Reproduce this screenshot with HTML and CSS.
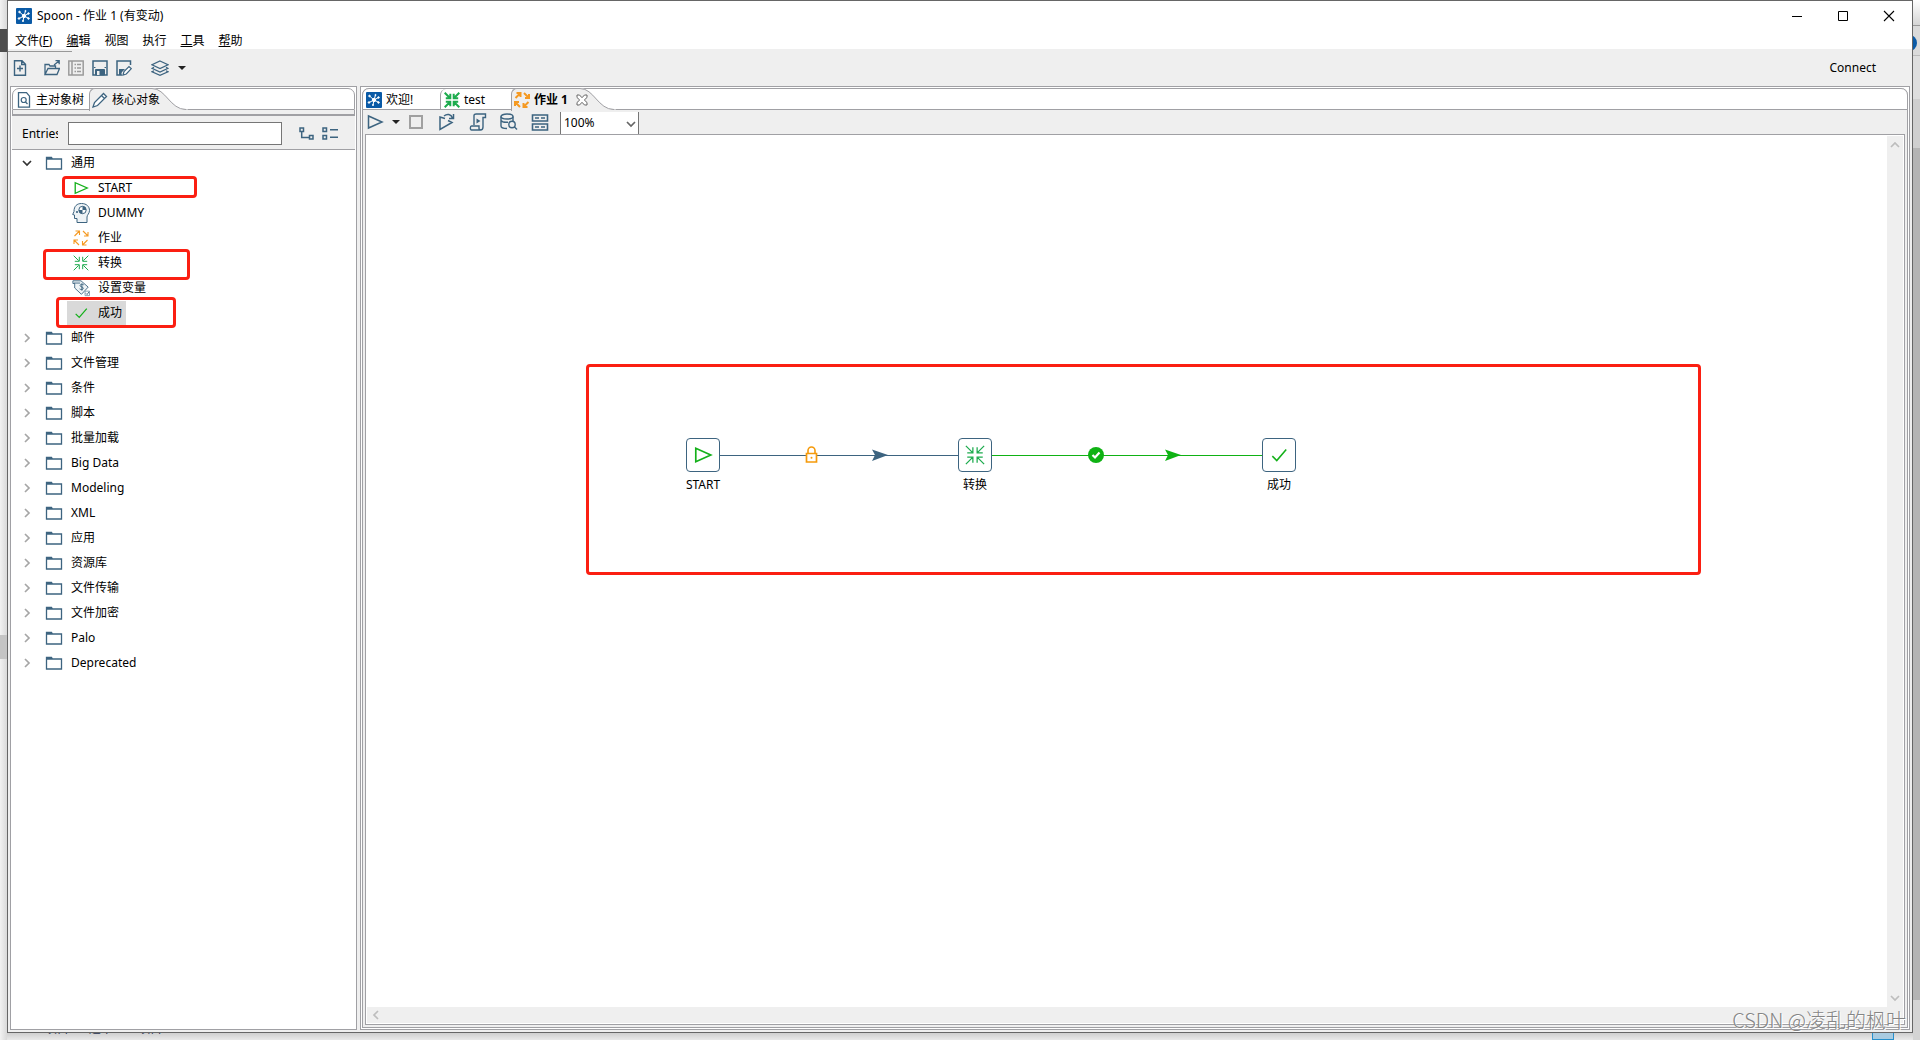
FILE: index.html
```html
<!DOCTYPE html>
<html lang="zh-CN">
<head>
<meta charset="utf-8">
<title>Spoon - 作业 1 (有变动)</title>
<link rel="stylesheet" href="styles.css">
</head>
<body>
<svg class="sprite" aria-hidden="true">
  <symbol id="logo" viewBox="0 0 16 16"><rect width="16" height="16" rx="1" fill="#0a5aa6"/><g stroke="#fff" stroke-width="1" fill="#fff"><path d="M8 8 3.500 4M8 8l1.500-5M8 8l4.500-2.500M8 8l5 2.500M8 8l-1 5M8 8l-5 2.500" fill="none"/><circle cx="8" cy="8" r="1.700"/><circle cx="3.500" cy="4" r=".8"/><circle cx="9.500" cy="3" r=".6"/><circle cx="12.500" cy="5.500" r=".8"/><circle cx="12.500" cy="10.500" r=".8"/><circle cx="7" cy="13" r=".6"/><circle cx="3" cy="10.500" r=".8"/></g></symbol>
  <symbol id="folder" viewBox="0 0 18 16"><path d="M1.500 14V2.500h5l1 1.500h9v10zM1.500 4h6.500" fill="none" stroke="#3d6480" stroke-width="1.300"/></symbol>
  <symbol id="play" viewBox="0 0 18 18"><path d="M2.500 3v12L16 9z" fill="none" stroke="currentColor" stroke-width="1.500"/></symbol>
  <symbol id="in" viewBox="0 0 16 16"><path d="M.7.700l5 5M15.300.700l-5 5M.7 15.300l5-5M15.300 15.300l-5-5M6.300 1.800v4.500H1.800M9.700 1.800v4.500h4.500M6.300 14.200V9.700H1.800M9.700 14.200V9.700h4.500" fill="none" stroke="#1cab4d" stroke-width="var(--sw,1)"/></symbol>
  <symbol id="out" viewBox="0 0 16 16"><path d="M1.500 6l5-5M2.500 1h4v4M10 1l5 5M15 2v4h-4M14.500 10l-5 5M9.500 11v4h4M6 15l-5-5M1 14v-4h4" fill="none" stroke="#f59a23" stroke-width="var(--sw,1.100)"/></symbol>
  <symbol id="check" viewBox="0 0 18 18"><path d="M3 10l4 4 8.500-10" fill="none" stroke="#14b01a" stroke-width="1.400"/></symbol>
  <symbol id="head" viewBox="0 0 18 20"><path d="M5 19.500v-4H2.500v-3.500L.7 11.500l1.300-3C2 3 5 .5 9.500.5c5 0 8 3 8 7 0 3-2.500 4.500-2.500 6.500v5.500z" fill="#eef3f6" stroke="#3d6480"/><circle cx="10.500" cy="7" r="3.700" fill="#fff" stroke="#3d6480"/><path d="M10.500 7V3.300A3.700 3.700 0 0 1 14.200 7zM10.500 7v3.700A3.700 3.700 0 0 1 6.800 7z" fill="#3d6480"/><circle cx="5" cy="9" r="1.100" fill="#3d6480"/></symbol>
  <symbol id="var" viewBox="0 0 20 18"><path d="M1 1h9l8 7-7.500 8L3 9V4H1zM2 3.500h7" fill="#eef3f6" stroke="#3d6480"/><path d="M13 5.500c-1-1-4-1-4 .8s3.500 1.200 3.500 3-3 1.700-4 .7M11 4v8" fill="none" stroke="#3d6480" stroke-width="1.100"/><path d="M14.500 12.500h5v5h-5z" fill="#fff" stroke="#7d98aa"/><path d="M15.500 15l1.300 1.300 2-3" fill="none" stroke="#3d6480"/></symbol>
  <symbol id="chev" viewBox="0 0 10 10"><path d="M3 1l4 4-4 4" fill="none" stroke="currentColor" stroke-width="1.700"/></symbol>
</svg>

<div class="desktop">
  <div class="behind-left" aria-hidden="true"></div>
  <div class="behind-right" aria-hidden="true"><i class="br-top"></i><i class="br-tab"><b></b></i><i class="br-gap"></i><i class="br-arrow"></i><i class="br-thumb"></i><i class="br-end"></i></div>
  <div class="behind-status"><span>21 个项目</span><span>选中 1 个项目</span><span>67.9 KB</span></div>
  <i class="behind-view"></i>

  <div class="window">
    <header class="titlebar">
      <svg class="ic16"><use href="#logo"/></svg>
      <h1>Spoon - 作业 1 (有变动)</h1>
      <div class="winbtns">
        <button aria-label="最小化"><svg viewBox="0 0 12 12"><path d="M1 6.500h10" stroke="#000"/></svg></button>
        <button aria-label="最大化"><svg viewBox="0 0 12 12"><path d="M1.500 1.500h9v9h-9z" fill="none" stroke="#000"/></svg></button>
        <button aria-label="关闭"><svg viewBox="0 0 12 12"><path d="M1 1l10 10M11 1L1 11" stroke="#000" stroke-width="1.100"/></svg></button>
      </div>
    </header>
    <nav class="menubar">
      <button>文件(<u>F</u>)</button><button><u>编</u>辑</button><button>视图</button><button>执行</button><button><u>工</u>具</button><button><u>帮</u>助</button>
    </nav>
    <div class="toolbar">
      <button aria-label="新建"><svg viewBox="0 0 16 16"><path d="M2.500.700h7.500l3.500 3.500v11h-11zM9.700.700v3.800h3.800M8 5.500v6M5 8.500h6" fill="none" stroke="#3d6480" stroke-width="1.400"/></svg></button>
      <button class="gap8" aria-label="打开"><svg viewBox="0 0 16 16"><path d="M1 14.500V4.500h4l1 1.500h5.500v2.500M1 14.500l3-6h11.500l-2.500 6zM10 5l5-4M11.500.700h3.700v3.600" fill="none" stroke="#3d6480" stroke-width="1.300"/></svg></button>
      <button aria-label="浏览"><svg viewBox="0 0 16 16"><path d="M.8 1h14.400v14H.8zM4 1v14M6.500 4.500H8M6.500 8H8M6.500 11.500H8M9 4.500h4M9 8h4M9 11.500h4" fill="none" stroke="#9b9b9b" stroke-width="1.500"/></svg></button>
      <button aria-label="保存"><svg viewBox="0 0 16 16"><path d="M1 1h14v14H1z" fill="none" stroke="#3d6480" stroke-width="1.500"/><path d="M3.500 9.500h9V15h-9z" fill="#3d6480" stroke="#3d6480"/><path d="M2 7.500h1.500M12.500 7.500H14" stroke="#3d6480"/><path d="M5 11h2.500v4H5z" fill="#efefef"/></svg></button>
      <button aria-label="另存为"><svg viewBox="0 0 16 16"><path d="M6 15H1V1h13.500v4" fill="none" stroke="#3d6480" stroke-width="1.500"/><path d="M3 9h6l-3 3-1 3H3z" fill="#3d6480"/><path d="M7 15l1-3.500L13 6.500l2.300 2.200-5 5.300z" fill="#fff" stroke="#3d6480" stroke-width="1.200"/></svg></button>
      <button class="wide" aria-label="透视图"><svg class="ic18" viewBox="0 0 18 16"><g fill="none" stroke="#3d6480" stroke-width="1.200"><path d="M9 1l8 3.700L9 8.500 1 4.700z"/><path d="M3 7.300L1 8.300l8 3.700 8-3.700-2-1M3 10.700l-2 1L9 15.300l8-3.600-2-1"/></g></svg><i class="drop"></i></button>
      <a class="connect" href="#connect">Connect</a>
    </div>

    <main class="panes">
      <section class="pane side">
        <div class="tabs">
          <button class="tab t-tree"><svg class="ic16" viewBox="0 0 16 16"><path d="M2.500.700h8l3 3.500v11h-11z" fill="none" stroke="#3d6480" stroke-width="1.300"/><circle cx="7.700" cy="8" r="2.500" fill="none" stroke="#3d6480" stroke-width="1.200"/><path d="M9.500 10l2 2" stroke="#3d6480" stroke-width="1.300"/></svg>主对象树</button>
          <button class="tab on t-core"><svg class="curve" viewBox="0 0 36 22"><path d="M0 0C14 0 18 21.500 34 21.500H36V22H0z" fill="#efefef"/><path d="M0 .5C14 .5 18 21.500 34 21.500" fill="none" stroke="#a0a0a4"/></svg><svg class="ic16" viewBox="0 0 16 16"><path d="M1 15l1.500-4.500L11.500 1.500l3 3L5.500 13.500zM9.500 3.500l3 3" fill="#fff" stroke="#3d6480" stroke-width="1.300"/></svg>核心对象</button>
        </div>
        <div class="rule"></div>
        <div class="search">
          <label for="entries">Entries:</label>
          <input id="entries" type="text">
          <button class="first" aria-label="展开"><svg viewBox="0 0 16 16"><path d="M2 2h3.500v3.500H2zM11.500 9.500H15V13h-3.500zM3.700 5.500v6h7.800" fill="none" stroke="#3d6480" stroke-width="1.500"/></svg></button>
          <button aria-label="折叠"><svg viewBox="0 0 16 16"><path d="M1 2h3.500v3.500H1zM1 9.500h3.500V13H1zM8 3.700h8M8 11.300h8" fill="none" stroke="#3d6480" stroke-width="1.500"/></svg></button>
        </div>
        <div class="treebox">
          <ul class="tree">
            <li class="open"><svg class="chev"><use href="#chev"/></svg><svg class="fold"><use href="#folder"/></svg>通用</li>
            <li class="leaf"><span><svg class="green"><use href="#play"/></svg>START</span></li>
            <li class="leaf"><span><svg class="tall"><use href="#head"/></svg>DUMMY</span></li>
            <li class="leaf"><span><svg><use href="#out"/></svg>作业</span></li>
            <li class="leaf"><span><svg><use href="#in"/></svg>转换</span></li>
            <li class="leaf"><span><svg class="tall"><use href="#var"/></svg>设置变量</span></li>
            <li class="leaf sel"><span><svg><use href="#check"/></svg>成功</span></li>
            <li><svg class="chev"><use href="#chev"/></svg><svg class="fold"><use href="#folder"/></svg>邮件</li>
            <li><svg class="chev"><use href="#chev"/></svg><svg class="fold"><use href="#folder"/></svg>文件管理</li>
            <li><svg class="chev"><use href="#chev"/></svg><svg class="fold"><use href="#folder"/></svg>条件</li>
            <li><svg class="chev"><use href="#chev"/></svg><svg class="fold"><use href="#folder"/></svg>脚本</li>
            <li><svg class="chev"><use href="#chev"/></svg><svg class="fold"><use href="#folder"/></svg>批量加载</li>
            <li><svg class="chev"><use href="#chev"/></svg><svg class="fold"><use href="#folder"/></svg>Big Data</li>
            <li><svg class="chev"><use href="#chev"/></svg><svg class="fold"><use href="#folder"/></svg>Modeling</li>
            <li><svg class="chev"><use href="#chev"/></svg><svg class="fold"><use href="#folder"/></svg>XML</li>
            <li><svg class="chev"><use href="#chev"/></svg><svg class="fold"><use href="#folder"/></svg>应用</li>
            <li><svg class="chev"><use href="#chev"/></svg><svg class="fold"><use href="#folder"/></svg>资源库</li>
            <li><svg class="chev"><use href="#chev"/></svg><svg class="fold"><use href="#folder"/></svg>文件传输</li>
            <li><svg class="chev"><use href="#chev"/></svg><svg class="fold"><use href="#folder"/></svg>文件加密</li>
            <li><svg class="chev"><use href="#chev"/></svg><svg class="fold"><use href="#folder"/></svg>Palo</li>
            <li><svg class="chev"><use href="#chev"/></svg><svg class="fold"><use href="#folder"/></svg>Deprecated</li>
          </ul>
          <i class="mark m-start"></i><i class="mark m-trans"></i><i class="mark m-ok"></i>
        </div>
      </section>

      <section class="pane editor">
        <div class="folder">
          <div class="tabs">
            <button class="tab t-welcome"><svg class="ic16"><use href="#logo"/></svg>欢迎!</button>
            <button class="tab t-test"><svg class="ic16 bold"><use href="#in"/></svg>test</button>
            <button class="tab on t-job"><svg class="curve" viewBox="0 0 36 22"><path d="M0 0C14 0 18 21.500 34 21.500H36V22H0z" fill="#efefef"/><path d="M0 .5C14 .5 18 21.500 34 21.500" fill="none" stroke="#a0a0a4"/></svg><svg class="ic16 bold"><use href="#out"/></svg>作业 1<svg class="close" viewBox="0 0 12 12"><path d="M1 1h2.500L6 3.700 8.500 1H11v2.500L8.300 6 11 8.500V11H8.500L6 8.300 3.500 11H1V8.500L3.700 6 1 3.500z" fill="#fff" stroke="#666"/></svg></button>
          </div>
          <div class="jobbar">
            <button class="run" aria-label="运行"><svg><use href="#play"/></svg><i class="drop"></i></button>
            <button aria-label="停止"><svg viewBox="0 0 18 18"><path d="M3 3h12v12H3z" fill="none" stroke="#a0a0a0" stroke-width="2"/></svg></button>
            <button aria-label="重放"><svg viewBox="0 0 18 18"><path d="M7 5.500L2 4v12.500l12-7-4-2M6 3c3-2.500 7-2 8.500 2M15.500 1v4.500H11" fill="none" stroke="#3d6480" stroke-width="1.500"/></svg></button>
            <button aria-label="验证"><svg viewBox="0 0 18 18"><path d="M5 12V2.500C5 1.500 6 1 7 1h9.500v3.500H14V14c0 2-1 3-2.500 3h-9C1 17 1 13 2.500 13H10v2.500c0 1 1 1.500 2 1.500" fill="none" stroke="#3d6480" stroke-width="1.400"/><path d="M7.500 5.500v5l4-2.500z" fill="#3d6480"/></svg></button>
            <button aria-label="SQL"><svg viewBox="0 0 18 18"><g fill="none" stroke="#3d6480" stroke-width="1.400"><ellipse cx="7" cy="3.500" rx="6" ry="2.500"/><path d="M1 3.500V13c0 1.500 3 2.500 6 2.500M13 3.500V8M1 7.500c1 1.500 4 2 7 1.700"/><circle cx="12" cy="11.500" r="3.200" fill="#efefef"/><path d="M14.300 13.800L17 16.500"/></g></svg></button>
            <button aria-label="结果"><svg viewBox="0 0 18 18"><path d="M1.500 2h15v6h-15zM1.500 11h15v6h-15zM4 5h4M10 5h4M4 14h4M10 14h4" fill="none" stroke="#3d6480" stroke-width="1.600"/></svg></button>
            <div class="zoom"><select aria-label="缩放"><option>100%</option></select><svg class="chev down"><use href="#chev"/></svg></div>
          </div>
          <div class="canvas">
            <div class="board">
              <svg class="hops" width="960" height="60">
                <path d="M2 30.500h272" stroke="#3d6480"/><path d="M274 30.500h304" stroke="#0fb214"/>
                <path d="M186 24.500l16 5.500-16 6 3-6z" fill="#3d6480"/>
                <path d="M479 24.500l16 5.500-16 6 3-6z" fill="#0fb214"/>
                <path d="M120.500 28.500h10v8.500h-10z" fill="#fff" stroke="#f59a0b" stroke-width="1.700"/><path d="M122 28v-2.500a3.500 3.500 0 0 1 7 0V28" fill="none" stroke="#f59a0b" stroke-width="1.600"/><circle cx="125.500" cy="32.800" r="1" fill="#f59a0b"/>
                <circle cx="410" cy="30" r="8" fill="#0fb214"/><path d="M406.500 30l2.500 2.500 4.500-5" fill="none" stroke="#fff" stroke-width="2.200"/>
              </svg>
              <div class="node n-start"><svg class="green"><use href="#play"/></svg><span>START</span></div>
              <div class="node n-trans"><svg><use href="#in"/></svg><span>转换</span></div>
              <div class="node n-ok"><svg><use href="#check"/></svg><span>成功</span></div>
              <i class="mark m-flow"></i>
            </div>
            <div class="vbar"><svg class="chev up"><use href="#chev"/></svg><svg class="chev down"><use href="#chev"/></svg></div>
            <div class="hbar"><svg class="chev left"><use href="#chev"/></svg></div>
          </div>
        </div>
      </section>
    </main>
  </div>
  <div class="watermark">CSDN @凌乱的枫叶</div>
</div>
</body>
</html>
```
FILE: styles.css
```css
:root {
  --line: #a0a0a4;
  --face: #efefef;
  --ink: #3d6480;
}
* { box-sizing: border-box; }
body {
  margin: 0;
  font: 12px/16px "Noto Sans", "Noto Sans CJK SC", sans-serif;
  color: #000;
}
button {
  display: flex;
  align-items: center;
  justify-content: center;
  padding: 0;
  border: 0;
  background: none;
  font: inherit;
  color: inherit;
  white-space: nowrap;
}
svg { display: block; flex: none; }
.sprite { position: absolute; width: 0; height: 0; }
.ic16 { width: 16px; height: 16px; }
.ic18 { width: 18px; height: 16px; }
.bold { --sw: 2; }
.green { color: #14b01a; }
.drop {
  width: 8px;
  border: 4px solid transparent;
  border-top-color: #222;
  border-bottom: 0;
}

/* desktop and what shows round the window */
.desktop {
  position: relative;
  display: flex;
  height: 100vh;
  padding: 0 7px;
  padding-bottom: 7px;
  background: linear-gradient(#cfcfcf, #e9e9e9) bottom / 100% 7px no-repeat, #ececec;
  overflow: hidden;
}
.behind-left {
  position: absolute;
  left: 0;
  top: 0;
  bottom: 0;
  width: 7px;
  background:
    linear-gradient(#4d4d4d, #4d4d4d) 0 29px / 7px 23px no-repeat,
    linear-gradient(#c4c4c4, #c4c4c4) 0 635px / 7px 24px no-repeat,
    linear-gradient(90deg, #f2f2f2, #d9d9d9);
}
.behind-right {
  position: absolute;
  right: 0;
  top: 0;
  bottom: 0;
  width: 7px;
  display: flex;
  flex-direction: column;
  background: #dadada;
}
.br-top { height: 26px; background: linear-gradient(#fff, #d5d5d5); border-bottom: 1px solid #999; }
.br-tab { height: 30px; padding-top: 9px; border-bottom: 1px solid #bbb; overflow: hidden; }
.br-tab b { display: block; width: 16px; height: 16px; margin-left: -12px; border-radius: 8px; background: #0a5aa6; }
.br-gap { height: 43px; background: #dedede; }
.br-arrow { height: 49px; background: #cfcfcf; }
.br-thumb { flex: 1; background: #b4b4b4; }
.br-end { height: 40px; background: #d4d4d4; }
.behind-status {
  position: absolute;
  left: 16px;
  bottom: 3px;
  display: flex;
  gap: 20px;
  color: #1e3050;
}
.behind-view {
  position: absolute;
  right: 26px;
  bottom: 0;
  width: 22px;
  height: 16px;
  border: 1px solid #2790cc;
  background: #a9cbe0;
}

/* window frame */
.window {
  position: relative;
  flex: 1;
  min-width: 0;
  display: flex;
  flex-direction: column;
  border: 1px solid #666;
  background: var(--face);
}
.titlebar {
  display: flex;
  align-items: center;
  height: 29px;
  padding-left: 8px;
  background: #fff;
}
.titlebar h1 { margin: 0 0 0 5px; font-size: 12px; font-weight: 400; }
.winbtns { display: flex; margin-left: auto; }
.winbtns button { width: 46px; height: 28px; }
.winbtns svg { width: 12px; height: 12px; }
.menubar {
  display: flex;
  height: 19px;
  background: #fff;
}
.menubar button { height: 22px; padding: 0 7px; }
.toolbar {
  position: relative;
  display: flex;
  align-items: center;
  height: 37px;
}
.toolbar::before {
  content: "";
  position: absolute;
  left: 0;
  top: 2px;
  width: 64px;
  height: 1px;
  background: #999;
}
.toolbar button { width: 24px; height: 24px; }
.toolbar button svg:not(.ic18) { width: 16px; height: 16px; }
.toolbar .gap8 { margin-left: 8px; }
.toolbar .wide { width: 40px; margin-left: 12px; gap: 9px; }
.connect { margin-left: auto; margin-right: 36px; color: #000; text-decoration: none; }

/* panes */
.panes {
  flex: 1;
  min-height: 0;
  display: grid;
  grid-template-columns: 347px minmax(0, 1fr);
  gap: 3px;
  padding: 0 2px 2px;
}
.pane {
  min-width: 0;
  display: flex;
  flex-direction: column;
  padding: 1px;
  border: 1px solid var(--line);
  background: #fff;
}
.tabs {
  display: flex;
  flex: none;
  height: 22px;
  border: 1px solid var(--line);
  border-radius: 7px 7px 0 0;
  background: #fff;
}
.tab {
  position: relative;
  justify-content: flex-start;
  height: 21px;
  gap: 4px;
  padding-left: 3px;
  isolation: isolate;
}
.tab.on::before {
  content: "";
  position: absolute;
  z-index: -1;
  left: 0;
  right: 8px;
  top: -1px;
  height: 22px;
  border-left: 1px solid var(--line);
  border-top: 1px solid var(--line);
  border-radius: 6px 0 0 0;
  background: var(--face);
}
.curve {
  position: absolute;
  z-index: -1;
  top: -1px;
  left: calc(100% - 8px);
  width: 36px;
  height: 22px;
}
.t-tree { width: 76px; }
.t-welcome { width: 77px; }
.t-test { width: 71px; border-left: 1px solid var(--line); border-radius: 6px 0 0 0; }
.t-job { font-weight: 700; }
.close { width: 12px; height: 12px; margin-left: 4px; }
.rule { height: 6px; background: var(--face); border-bottom: 2px solid var(--line); border-left: 1px solid var(--line); border-right: 1px solid var(--line); }
.search {
  display: flex;
  align-items: center;
  height: 33px;
  padding: 2px 0 0 10px;
  background: var(--face);
}
.search label { width: 36px; margin-right: 10px; overflow: hidden; white-space: nowrap; }
.search input {
  width: 214px;
  height: 23px;
  border: 1px solid #767676;
  background: #fff;
  font: inherit;
}
.search button { width: 24px; height: 24px; }
.search .first { margin-left: 12px; }
.search svg { width: 16px; height: 16px; }
.treebox { position: relative; flex: 1; border-top: 1px solid var(--line); }

.tree { margin: 0; padding: 0; list-style: none; }
.tree li { display: flex; align-items: center; height: 25px; padding-left: 10px; }
.chev { width: 10px; height: 10px; color: #a6a6a6; }
.open .chev { color: #333; transform: rotate(90deg); }
.down { transform: rotate(90deg); }
.up { transform: rotate(-90deg); }
.left { transform: rotate(180deg); }
.fold { width: 18px; height: 16px; margin: 0 8px 0 13px; }
.tree .leaf { padding-left: 55px; }
.leaf span { display: flex; align-items: center; height: 24px; gap: 8px; padding: 0 4px 0 5px; }
.leaf svg { width: 18px; height: 16px; }
.leaf .tall { height: 20px; }
.sel span { background: #d9d9d9; }

.mark { position: absolute; border: 3px solid #fb1f12; border-radius: 4px; }
.m-start { left: 50px; top: 26px; width: 135px; height: 22px; }
.m-trans { left: 31px; top: 99px; width: 147px; height: 31px; }
.m-ok { left: 44px; top: 147px; width: 120px; height: 31px; }

/* editor */
.folder { flex: 1; display: flex; flex-direction: column; background: var(--face); border: 1px solid var(--line); border-top: 0; border-radius: 7px 7px 0 0; }
.folder .tabs { margin: 0 -1px; }
.jobbar { display: flex; align-items: center; height: 24px; padding-left: 3px; }
.jobbar button { width: 31px; height: 22px; }
.jobbar svg { width: 18px; height: 18px; }
.jobbar .run { width: 34px; gap: 8px; color: var(--ink); }
.zoom {
  position: relative;
  width: 79px;
  height: 22px;
  margin: 2px 0 0 5px;
}
.zoom select {
  width: 100%;
  height: 22px;
  padding: 0 3px;
  border: 1px solid #767676;
  border-width: 0 1px;
  border-radius: 0;
  background: #fff;
  font: inherit;
  color: #000;
  appearance: none;
}
.zoom .chev { position: absolute; right: 3px; top: 7px; width: 10px; height: 10px; color: #666; }
.canvas {
  flex: 1;
  display: grid;
  grid-template: minmax(0, 1fr) 16px / minmax(0, 1fr) 16px;
  margin: 0 2px 2px;
  padding: 1px;
  border: 1px solid var(--line);
  background: #fff;
}
.board { position: relative; overflow: hidden; }
.vbar {
  display: flex;
  flex-direction: column;
  align-items: center;
  justify-content: space-between;
  padding: 4px 0;
  background: var(--face);
}
.hbar { grid-column: 1 / 3; display: flex; align-items: center; padding-left: 4px; background: var(--face); }
.vbar .chev, .hbar .chev { color: #bdbdbd; }
.hops { position: absolute; left: 319px; top: 289px; }
.node {
  position: absolute;
  top: 302px;
  width: 34px;
  height: 34px;
  display: flex;
  flex-direction: column;
  align-items: center;
  padding-top: 6px;
  gap: 12px;
  border: 1px solid var(--ink);
  border-radius: 4px;
  background: #fff;
  white-space: nowrap;
}
.node svg { width: 20px; height: 20px; }
.n-start { left: 319px; }
.n-trans { left: 591px; }
.n-ok { left: 895px; }
.m-flow { left: 219px; top: 228px; width: 1115px; height: 211px; }
.watermark {
  position: absolute;
  right: 14px;
  bottom: 6px;
  font: 20px/28px "Noto Sans CJK SC", sans-serif;
  font-weight: 300;
  color: #858585;
  text-shadow: 1px 1px 0 #fff;
}
```
